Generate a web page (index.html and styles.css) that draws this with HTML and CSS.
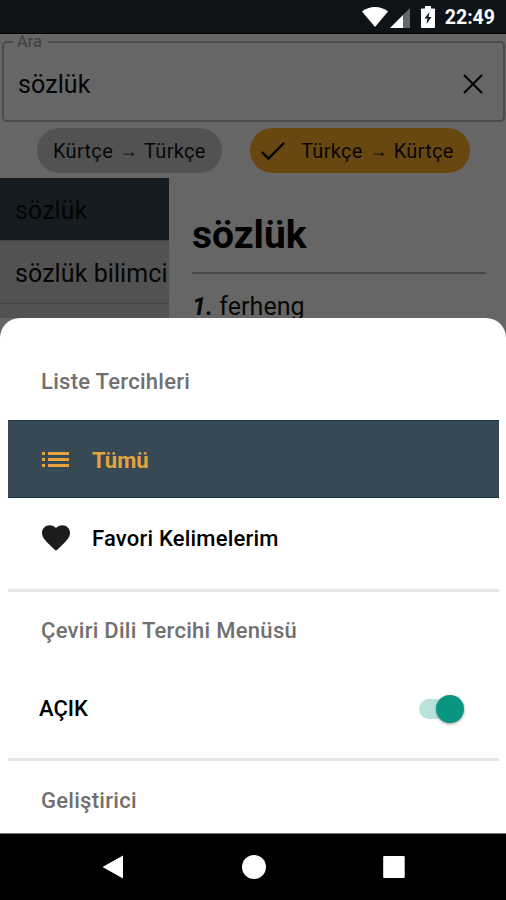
FILE: index.html
```html
<!DOCTYPE html>
<html lang="tr">
<head>
<meta charset="utf-8">
<title>Sözlük</title>
<link rel="stylesheet" href="styles.css">
</head>
<body>
<div class="phone">
  <header class="status">
    <svg class="wifi" viewBox="0 0 26 20"><path d="M0 4.500C7-1.500 19-1.500 26 4.500L13 20z"/></svg>
    <svg class="signal" viewBox="0 0 20 20"><path d="M0 20L13 7V20z"/><path class="dim" d="M13 7L20 0V20H13z"/></svg>
    <svg class="battery" viewBox="0 0 14 22"><path d="M4 0h6v2.500h3q1 0 1 1V21q0 1-1 1H1q-1 0-1-1V3.500q0-1 1-1h3z"/><path class="bolt" d="M8.500 6L3.500 12.500H6.500L5.500 18L10.500 11H7.500z"/></svg>
    <span class="clock">22:49</span>
  </header>
  <main class="page">
    <fieldset class="search">
      <legend>Ara</legend>
      <span class="query">sözlük</span>
      <svg class="close" viewBox="0 0 20 20"><path d="M1 1L19 19M19 1L1 19"/></svg>
    </fieldset>
    <div class="chips">
      <div class="chip"><span>Kürtçe</span><span class="arrow">→</span><span>Türkçe</span></div>
      <div class="chip active"><svg class="check" viewBox="0 0 24 18"><path d="M1 10L7.500 16.500L23 1"/></svg><span>Türkçe</span><span class="arrow">→</span><span>Kürtçe</span></div>
    </div>
    <div class="content">
      <div class="words">
        <div class="word selected">sözlük</div>
        <div class="word">sözlük bilimci</div>
        <div class="word"></div>
      </div>
      <article class="entry">
        <h1>sözlük</h1>
        <p><b>1.</b> ferheng</p>
      </article>
    </div>
  </main>
  <section class="sheet">
    <h2 class="label">Liste Tercihleri</h2>
    <div class="option current">
      <svg class="list" viewBox="0 0 27 15"><path d="M0 0h3v3H0zM6 0h21v3H6zM0 6h3v3H0zM6 6h21v3H6zM0 12h3v3H0zM6 12h21v3H6z"/></svg>
      <span class="all">Tümü</span>
    </div>
    <div class="option">
      <svg class="heart" viewBox="2 3 20 18.350"><path d="M12 21.350l-1.450-1.320C5.400 15.360 2 12.280 2 8.500 2 5.420 4.420 3 7.500 3c1.740 0 3.410.81 4.500 2.090C13.090 3.810 14.760 3 16.500 3 19.580 3 22 5.420 22 8.500c0 3.780-3.400 6.860-8.550 11.540z"/></svg>
      <span class="favorites">Favori Kelimelerim</span>
    </div>
    <hr class="first">
    <h2 class="label language">Çeviri Dili Tercihi Menüsü</h2>
    <div class="toggle-row"><span>AÇIK</span><div class="switch"><div class="thumb"></div></div></div>
    <hr>
    <h2 class="label developer">Geliştirici</h2>
  </section>
  <nav class="nav">
    <svg viewBox="0 0 24 24"><path d="M1.500 12L22 .5V23.500z"/></svg>
    <svg viewBox="0 0 24 24"><circle cx="12" cy="12" r="12"/></svg>
    <svg viewBox="0 0 24 24"><rect x="1.200" y="1" width="21.500" height="22" rx="1"/></svg>
  </nav>
</div>
</body>
</html>
```
FILE: styles.css
```css
* { box-sizing: border-box; }
body { margin: 0; background: #000; font-family: Roboto, "Noto Sans", sans-serif; color: #000; }
.phone { width: 506px; height: 900px; overflow: hidden; display: flex; flex-direction: column; background: #666; }
.status { height: 34px; flex: none; background: #0e1318; border-bottom: 1px solid #000; display: flex; align-items: center; justify-content: flex-end; padding-right: 11px; color: #fff; }
.status svg { fill: #fff; }
.wifi { width: 26px; height: 20px; }
.signal { width: 20px; height: 20px; margin: 2px 0 0 2px; }
.signal .dim { fill: #64676a; }
.battery { width: 14px; height: 22px; margin: 1px 10px 0 11px; }
.battery .bolt { fill: #0e1318; }
.clock { font-size: 19.5px; font-weight: 700; line-height: 34px; padding-top: 3px; }
.page { height: 284px; flex: none; }
.search { height: 88px; margin: 0 1px 0 2px; border: 2px solid #4c4c4c; border-radius: 5px; padding: 0 20px 0 14px; display: flex; align-items: center; justify-content: space-between; min-width: 0; }
.search legend { font-size: 16px; line-height: 16px; padding: 0 6px 0 4px; margin-left: -5px; letter-spacing: .3px; color: #404040; }
.query { font-size: 25px; line-height: 30px; letter-spacing: .1px; color: #050505; }
.close { width: 20px; height: 20px; margin-bottom: 3px; fill: none; stroke: #000; stroke-width: 2.100; }
.chips { display: flex; padding: 6px 0 0 37px; gap: 28px; height: 56px; }
.chip { width: 185px; height: 45px; border-radius: 23px; background: #525252; display: flex; align-items: center; padding-left: 16px; font-size: 20px; letter-spacing: .3px; white-space: nowrap; color: #080808; }
.chip.active { width: 220px; background: #694710; padding-left: 11px; }
.arrow { width: 19px; margin: 0 6px; font: 18px/20px "Liberation Sans", sans-serif; letter-spacing: 0; text-align: center; }
.check { width: 24px; height: 18px; margin-right: 16px; fill: none; stroke: #000; stroke-width: 2.400; }
.content { display: flex; height: 140px; }
.words { width: 169px; background: #525252; }
.word { height: 63px; border-bottom: 1px solid #434343; padding-left: 15px; font-size: 25px; line-height: 66px; letter-spacing: .08px; white-space: nowrap; overflow: hidden; color: #050505; }
.word.selected { background: #151d22; }
.entry { flex: 1; padding: 0 20px 0 23px; }
h1 { margin: 0; height: 96px; border-bottom: 2px solid #484848; font-size: 39px; font-weight: 700; line-height: 114px; }
.entry p { margin: 18px 0 0; font-size: 25px; line-height: 30px; letter-spacing: .05px; color: #080808; }
.entry b { font-style: italic; }
.sheet { position: relative; height: 515px; flex: none; background: #fff; border-radius: 20px 20px 0 0; padding: 0 7px 0 8px; overflow: hidden; font-size: 22px; font-weight: 500; }
.sheet::before { content: ""; display: block; height: 44px; }
.label { margin: 0; padding-left: 33px; height: 58px; color: #707070; font-size: 22px; font-weight: 500; line-height: 39px; letter-spacing: .28px; }
.option { height: 79px; display: flex; align-items: center; padding-left: 34px; gap: 23px; }
.current { height: 78px; background: #364955; border: 1px solid #153448; border-width: 1px 0; color: #e5a43b; }
.list { width: 27px; height: 15px; fill: #e5a43b; }
.heart { width: 28px; height: 26px; margin: 0 -1px 0 0; fill: #1c1c1c; }
.favorites { padding-top: 2px; letter-spacing: .2px; }
.all { font-weight: 700; padding-top: 2px; }
hr { margin: 0; height: 3px; border: 0; background: #e6e6e6; }
hr.first { margin-top: 12px; }
.language { height: 67px; padding-top: 19px; }
.toggle-row { height: 99px; padding: 0 35px 0 31px; display: flex; align-items: center; justify-content: space-between; }
.switch { width: 45px; height: 20px; border-radius: 10px; background: #b8e2dc; display: flex; align-items: center; justify-content: flex-end; }
.thumb { width: 28px; height: 28px; border-radius: 50%; background: #0a9581; box-shadow: 0 1px 3px #999; flex: none; }
.developer { padding-top: 20px; }
.nav { height: 67px; flex: none; background: #000; border-top: 1px solid #777; display: flex; align-items: center; justify-content: center; gap: 116.500px; padding-left: 1px; }
.nav svg { width: 24px; height: 24px; fill: #fff; }
```
